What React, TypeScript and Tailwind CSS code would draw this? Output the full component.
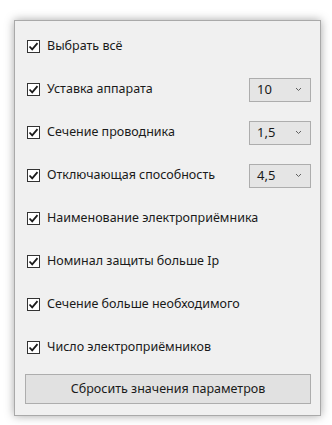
import React from "react";

const font = { fontFamily: '"Noto Sans", "Open Sans", sans-serif' };

const Check: React.FC = () => (
  <span className="flex h-[13px] w-[13px] shrink-0 items-center justify-center border border-[#333333] bg-white">
    <svg width="11" height="11" viewBox="0 0 11 11">
      <path d="M1.5 5.5 L4.2 8.3 L9.5 2.2" fill="none" stroke="#1a1a1a" strokeWidth="1.8" />
    </svg>
  </span>
);

const Select: React.FC<{ value: string }> = ({ value }) => (
  <div className="flex h-[24px] w-[62px] items-center justify-between border border-[#adadad] bg-[#e5e5e5] pl-[7px] pr-[8px] text-[13px] text-[#1a1a1a]">
    <span>{value}</span>
    <svg width="7" height="5" viewBox="0 0 7 5">
      <path d="M1 1 L3.5 3.5 L6 1" fill="none" stroke="#606060" strokeWidth="1" />
    </svg>
  </div>
);

const rows: { label: string; value?: string }[] = [
  { label: "Выбрать всё" },
  { label: "Уставка аппарата", value: "10" },
  { label: "Сечение проводника", value: "1,5" },
  { label: "Отключающая способность", value: "4,5" },
  { label: "Наименование электроприёмника" },
  { label: "Номинал защиты больше Ip" },
  { label: "Сечение больше необходимого" },
  { label: "Число электроприёмников" },
];

export default function App() {
  return (
    <div className="h-[425px] w-[332px] bg-white pl-[14px] pt-[20px]" style={font}>
      <div className="flex h-[396px] w-[307px] flex-col border border-[#a9a9a9] bg-[#f0f0f0] pl-[12px] pr-[9px] pt-[4px] shadow-[0_0_9px_rgba(0,0,0,0.35)]">
        {rows.map((r) => (
          <div key={r.label} className="flex h-[43px] items-center justify-between">
            <div className="flex items-center gap-[7px] text-[12.5px] text-[#1a1a1a]">
              <Check />
              <span>{r.label}</span>
            </div>
            {r.value && <Select value={r.value} />}
          </div>
        ))}
        <button className="mt-[5px] h-[30px] w-[286px] -ml-[2px] border border-[#adadad] bg-[#e1e1e1] text-[12.5px] text-[#1a1a1a]">
          Сбросить значения параметров
        </button>
      </div>
    </div>
  );
}
